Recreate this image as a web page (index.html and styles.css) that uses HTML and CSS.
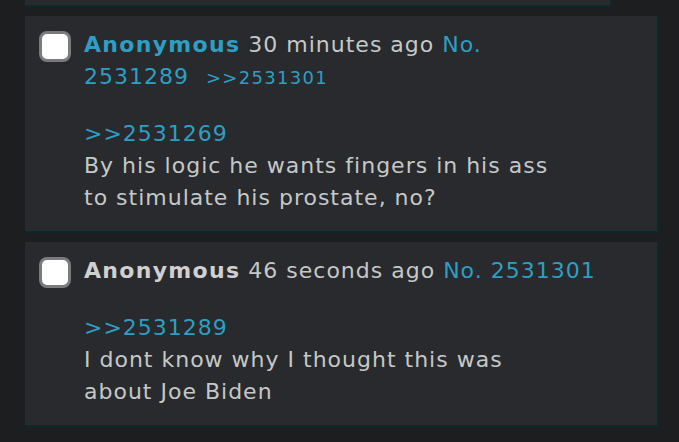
FILE: index.html
```
<!DOCTYPE html>
<html lang="en">
<head>
  <meta charset="UTF-8">
  <meta name="viewport" content="width=device-width, initial-scale=1.0">
  <title>Thread</title>
  <link rel="stylesheet" href="styles.css">
</head>
<body>
  <div class="thread">
    <div class="post prev-post"></div>

    <div class="post">
      <div class="post-head">
        <input type="checkbox" class="post-check">
        <div class="post-info">
          <a class="name name-link" href="#">Anonymous</a>
          <span class="date">30 minutes ago</span>
          <a class="post-link" href="#">No.</a>
          <span class="post-num"><a class="post-link" href="#">2531289</a><a class="backlink" href="#">&gt;&gt;2531301</a></span>
        </div>
      </div>
      <blockquote class="post-body">
        <a class="quotelink" href="#">&gt;&gt;2531269</a><br>
        By his logic he wants fingers in his ass to stimulate his prostate, no?
      </blockquote>
    </div>

    <div class="post">
      <div class="post-head">
        <input type="checkbox" class="post-check">
        <div class="post-info">
          <span class="name">Anonymous</span>
          <span class="date">46 seconds ago</span>
          <a class="post-link" href="#">No.</a>
          <span class="post-num"><a class="post-link" href="#">2531301</a></span>
        </div>
      </div>
      <blockquote class="post-body">
        <a class="quotelink" href="#">&gt;&gt;2531289</a><br>
        I dont know why I thought this was about Joe Biden
      </blockquote>
    </div>
  </div>
</body>
</html>
```

FILE: styles.css
```
/* General Styling */
body {
  margin: 0;
  padding: 0;
  background: #1d1e20;
  font-family: 'DejaVu Sans', Verdana, sans-serif;
  font-size: 22px;
  line-height: 32px;
  letter-spacing: 1px;
  color: #c5c8c6;
  height: 442px;
  overflow: hidden;
}

a {
  text-decoration: none;
}

.thread {
  padding-left: 25px;
  margin-top: -57px;
}

/* Post Panels */
.post {
  width: 604px;
  padding: 13px 14px 17px 14px;
  margin-bottom: 9px;
  background: #282a2e;
  border-right: 2px solid #0d2828;
  border-bottom: 2px solid #0d2828;
}

.prev-post {
  width: 557px;
  height: 32px;
}

.post-head {
  display: flex;
  align-items: flex-start;
  gap: 13px;
}

/* Checkbox */
.post-check {
  appearance: none;
  -webkit-appearance: none;
  flex-shrink: 0;
  width: 32px;
  height: 31px;
  margin: 2px 0 0 0;
  background: #ffffff;
  border: 3px solid #7b7b7d;
  border-radius: 8px;
  box-sizing: border-box;
}

.post-info {
  flex: 1;
}

.name {
  font-weight: bold;
  letter-spacing: 1.3px;
  color: #d0d0d0;
}

.name-link {
  color: #2e9fc2;
}

.post-link,
.quotelink,
.backlink {
  color: #2e9fc2;
}

.post-num {
  white-space: nowrap;
}

.backlink {
  font-size: 18px;
  letter-spacing: 1.3px;
  margin-left: 17px;
}

/* Post Body */
.post-body {
  margin: 24px 0 0 45px;
  max-width: 480px;
}
```
